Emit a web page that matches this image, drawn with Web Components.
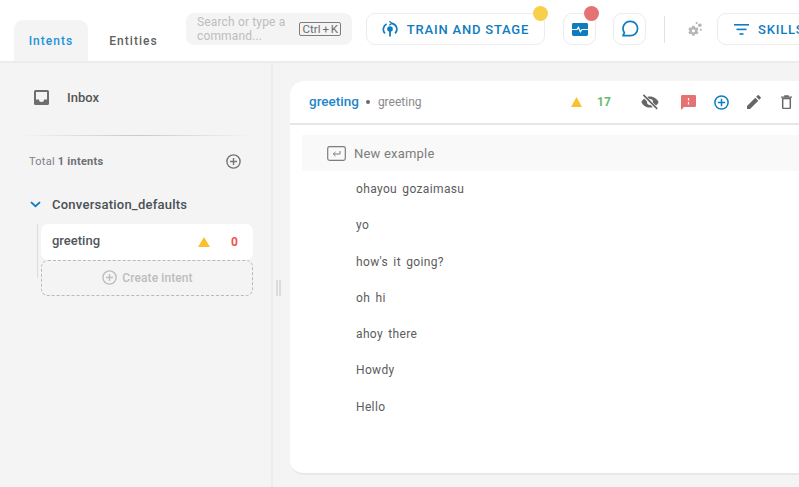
<!DOCTYPE html>
<html>
<head>
<meta charset="utf-8">
<style>
  html, body { margin: 0; height: 100%; overflow: hidden; background: #fff; font-family: Roboto, sans-serif; }
</style>
</head>
<body>
<app-shell>
  <top-bar slot="top"></top-bar>
  <side-panel slot="side"></side-panel>
  <intent-card slot="main">
    <example-row>ohayou gozaimasu</example-row>
    <example-row>yo</example-row>
    <example-row>how's it going?</example-row>
    <example-row>oh hi</example-row>
    <example-row>ahoy there</example-row>
    <example-row>Howdy</example-row>
    <example-row>Hello</example-row>
  </intent-card>
</app-shell>

<script>
class AppShell extends HTMLElement {
    connectedCallback() {
        let shadowRoot = this.attachShadow({ mode: 'open' });
        shadowRoot.innerHTML = `
            <style>
                :host { display: flex; flex-direction: column; width: 799px; height: 487px; overflow: hidden; }
                .body { display: flex; flex: 1; min-height: 0; background: #f4f4f4; }
                .main { flex: 1; min-width: 0; padding: 18px 0 12px 17px; display: flex; }
            </style>
            <slot name="top"></slot>
            <div class="body">
                <slot name="side"></slot>
                <div class="main"><slot name="main"></slot></div>
            </div>
        `;
    }
}
customElements.define('app-shell', AppShell);

class TopBar extends HTMLElement {
    connectedCallback() {
        let shadowRoot = this.attachShadow({ mode: 'open' });
        shadowRoot.innerHTML = `
            <style>
                :host { display: flex; align-items: flex-start; height: 61px; border-bottom: 2px solid #ececec; box-sizing: content-box; background: #fff; flex: none; overflow: hidden; }
                .tabs { display: flex; flex: none; margin: 20px 0 0 14px; height: 43px; font-size: 12px; font-weight: 500; letter-spacing: 1.05px; }
                .tab { width: 74px; display: flex; align-items: center; justify-content: center; border-radius: 9px 9px 0 0; color: #5f5f5f; box-sizing: border-box; padding-bottom: 1px; }
                .tab.on { background: #f4f4f4; color: #1f92d6; }
                .tab + .tab { width: 91px; }
                .search { flex: none; margin: 13px 0 0 7px; width: 166px; height: 32px; border-radius: 8px; background: #f4f4f4; display: flex; align-items: center; padding: 0 11px; box-sizing: border-box; justify-content: space-between; color: #bdbdbd; font-size: 12px; line-height: 14px; letter-spacing: .15px; white-space: nowrap; }
                .kbd { border: 1px solid #7d7d7d; border-radius: 2px; color: #6d6d6d; font-size: 11.500px; line-height: 12px; padding: 0 2px 0 3px; white-space: nowrap; letter-spacing: 0; word-spacing: -1px; }
                .btn { position: relative; flex: none; height: 32px; border: 1.500px solid #ececec; border-radius: 9px; box-sizing: border-box; margin-top: 13px; display: flex; align-items: center; justify-content: center; color: #0f7cc0; background: #fff; }
                .train { width: 179px; margin-left: 14px; font-size: 13px; font-weight: 500; letter-spacing: .8px; gap: 9px; }
                .square { width: 33px; }
                .skills { width: 110px; font-size: 13px; font-weight: 500; letter-spacing: .8px; gap: 9px; justify-content: flex-start; padding-left: 16px; }
                .dot { position: absolute; width: 15px; height: 15px; border-radius: 50%; top: -8px; right: -4px; }
                .rule { flex: none; width: 1px; height: 27px; background: #e2e2e2; margin: 16px 0 0 18px; }
                svg { flex: none; display: block; }
                .gear { flex: none; margin: 21px 14px 0 21px; }
            </style>
            <div class="tabs">
                <div class="tab on">Intents</div>
                <div class="tab">Entities</div>
            </div>
            <div class="search">
                <span>Search or type a<br>command...</span>
                <span class="kbd">Ctrl + K</span>
            </div>
            <div class="btn train">
                <svg width="16" height="16" viewBox="0 0 16 16" fill="none" stroke="#0f7cc0" stroke-width="1.700"><path d="M2.900 12.400A6 6 0 0 1 4.600 3M13.100 12.400A6 6 0 0 0 9.800 2.300"/><path d="M7.400 .3 L9.800 2.400 L7.300 4.300" stroke-width="1.300"/><circle cx="8" cy="8" r="2.800" fill="#0f7cc0" stroke="none"/><rect x="7.100" y="10" width="1.800" height="5.500" fill="#0f7cc0" stroke="none"/></svg>
                <span>TRAIN AND STAGE</span>
                <span class="dot" style="background:#f8cf4a"></span>
            </div>
            <div class="btn square" style="margin-left:18px">
                <svg width="16" height="13" viewBox="0 0 16 13"><rect width="16" height="13" rx="1.400" fill="#0f7cc0"/><path d="M0 6.500h5l1.400-2.200 2 4.400 1.600-2.200h6" fill="none" stroke="#fff" stroke-width="1.200"/></svg>
                <span class="dot" style="background:#e57373"></span>
            </div>
            <div class="btn square" style="margin-left:17px">
                <svg width="18" height="18" viewBox="0 0 18 18" fill="none" stroke="#0f7cc0" stroke-width="1.700"><path d="M9.400 1.300a7.200 7.200 0 0 1 0 14.400H2l1.400-3A7.200 7.200 0 0 1 9.400 1.300z" stroke-linejoin="round"/></svg>
            </div>
            <div class="rule"></div>
            <svg class="gear" width="17" height="18" viewBox="0 0 16 17" fill="#b5b5b5"><path d="M5.900 4.500h2.200l.3 1.400 1 .5 1.300-.5 1.100 1.900-1 .9v1.100l1 .9-1.100 1.900-1.300-.5-1 .5-.3 1.400H5.900l-.3-1.400-1-.5-1.300.5-1.100-1.900 1-.9V8.700l-1-.9 1.100-1.900 1.300.5 1-.5z"/><circle cx="7" cy="9.300" r="1.500" fill="#fff"/><circle cx="13" cy="4" r="1.700"/><circle cx="14" cy="8.300" r="1"/><circle cx="10" cy="2" r="1"/></svg>
            <div class="btn skills">
                <svg width="15" height="11" viewBox="0 0 15 11" fill="#0f7cc0"><rect width="15" height="1.600"/><rect x="2.500" y="4.600" width="10" height="1.600"/><rect x="5.500" y="9.200" width="4" height="1.600"/></svg>
                <span>SKILLS</span>
            </div>
        `;
    }
}
customElements.define('top-bar', TopBar);

class SidePanel extends HTMLElement {
    connectedCallback() {
        let shadowRoot = this.attachShadow({ mode: 'open' });
        shadowRoot.innerHTML = `
            <style>
                :host { display: block; position: relative; flex: none; width: 273px; box-sizing: border-box; border-right: 2px solid #ececec; padding: 0 18px 0 0; font-size: 13px; color: #4f4f4f; }
                .inbox { display: flex; align-items: center; height: 34px; margin-top: 17px; padding-left: 34px; font-weight: 500; color: #565656; }
                .inbox svg { margin-right: 18px; }
                .sep { height: 1px; margin: 21px 0 0 20px; background: linear-gradient(90deg, #f4f4f4, #c9c9c9 50%, #f4f4f4); }
                .total { display: flex; justify-content: space-between; align-items: center; height: 18px; margin-top: 16px; padding: 0 12px 0 29px; font-size: 11px; color: #7d8288; letter-spacing: .25px; }
                .total b { font-weight: 700; color: #6b7076; }
                .group { display: flex; align-items: center; margin: 25px 0 0 30px; height: 18px; font-weight: 500; gap: 11px; color: #4a4f55; letter-spacing: .24px; }
                .tree { position: relative; margin: 11px 0 0 41px; }
                .tree::before { content: ""; position: absolute; left: -4px; top: 0; bottom: 18px; width: 1px; background: #dcdcdc; }
                .item { height: 36px; background: #fff; border-radius: 7px; display: flex; align-items: center; padding: 0 15px 3px 11px; box-sizing: border-box; font-weight: 500; color: #52565b; }
                .item .name { flex: 1; }
                .item svg { margin: 3px 1px 0 0; }
                .item b { width: 19px; text-align: right; color: #ef5350; font-size: 12px; font-weight: 700; margin-left: 8px; padding-top: 3px; }
                .create { height: 36px; box-sizing: border-box; border: 1px dashed #b9b9b9; border-radius: 7px; display: flex; align-items: center; justify-content: center; gap: 5px; color: #bdbdbd; font-size: 12px; font-weight: 500; letter-spacing: .1px; padding: 0 0 1px 1px; }
                .handle { position: absolute; right: -10px; top: 217px; width: 5px; height: 16px; border: solid #dcdcdc; border-width: 0 2px; box-sizing: border-box; }
                svg { display: block; flex: none; }
            </style>
            <div class="inbox">
                <svg width="15" height="15" viewBox="0 0 15 15"><rect width="15" height="15" rx="1.600" fill="#6e6e6e"/><path d="M2 2h11v7.400H10a2.500 2.500 0 0 1-5 0H2z" fill="#f4f4f4"/></svg>
                <span>Inbox</span>
            </div>
            <div class="sep"></div>
            <div class="total">
                <span>Total <b>1 intents</b></span>
                <svg width="15" height="15" viewBox="0 0 15 15" fill="none" stroke="#757575" stroke-width="1.400"><circle cx="7.500" cy="7.500" r="6.600"/><path d="M7.500 4v7M4 7.500h7"/></svg>
            </div>
            <div class="group">
                <svg width="11" height="7" viewBox="0 0 11 7" fill="none" stroke="#0f7cc0" stroke-width="1.800"><path d="M1 1.200l4.500 4 4.500-4"/></svg>
                <span>Conversation_defaults</span>
            </div>
            <div class="tree">
                <div class="item">
                    <span class="name">greeting</span>
                    <svg width="12" height="10" viewBox="0 0 12 10"><path d="M6 0l6 10H0z" fill="#fbc02d"/></svg>
                    <b>0</b>
                </div>
                <div class="create">
                    <svg width="15" height="15" viewBox="0 0 15 15" fill="none" stroke="#bdbdbd" stroke-width="1.400"><circle cx="7.500" cy="7.500" r="6.600"/><path d="M7.500 4v7M4 7.500h7"/></svg>
                    <span>Create intent</span>
                </div>
            </div>
            <div class="handle"></div>
        `;
    }
}
customElements.define('side-panel', SidePanel);

class IntentCard extends HTMLElement {
    connectedCallback() {
        let shadowRoot = this.attachShadow({ mode: 'open' });
        shadowRoot.innerHTML = `
            <style>
                :host { display: flex; flex-direction: column; flex: 1; min-width: 0; background: #fff; border-radius: 14px 0 0 14px; border-bottom: 2px solid #e8e8e8; box-sizing: border-box; }
                header { display: flex; align-items: center; height: 42px; border-bottom: 2px solid #e6e6e6; padding-left: 19px; flex: none; }
                .title { color: #1f86c9; font-size: 13.500px; font-weight: 500; padding-bottom: 2px; }
                .bullet { width: 4px; height: 4px; border-radius: 50%; background: #6a6a6a; margin: 0 8px 0 7px; }
                .sub { color: #8a8a8a; font-size: 12px; flex: 1; padding-bottom: 1px; }
                .count { color: #66bb6a; font-size: 12px; font-weight: 700; margin: 0 29px 0 17px; width: 15px; padding-bottom: 1px; }
                .icons { display: flex; align-items: center; margin-right: 2px; }
                svg { display: block; flex: none; }
                .new { display: flex; align-items: center; height: 36px; margin: 10px 0 0 12px; background: #f9f9f9; padding-left: 25px; gap: 8px; color: #7d7d7d; font-size: 13px; letter-spacing: .2px; flex: none; }
            </style>
            <header>
                <span class="title">greeting</span>
                <span class="bullet"></span>
                <span class="sub">greeting</span>
                <svg style="margin-right:-2px" width="11" height="10" viewBox="0 0 11 10"><path d="M5.500 0l5.500 10H0z" fill="#fbc02d"/></svg>
                <span class="count">17</span>
                <div class="icons">
                    <svg width="18" height="16" viewBox="0 0 18 16" fill="#666"><path d="M9 2.400C5 2.400 1.800 4.900.4 8c1.400 3.100 4.600 5.600 8.600 5.600S16.200 11.100 17.600 8C16.200 4.900 13 2.400 9 2.400z"/><circle cx="9" cy="8" r="3" fill="#fff"/><path d="M2 1l14 14" stroke="#fff" stroke-width="3.400"/><path d="M2.400.9l13.800 14" stroke="#666" stroke-width="1.700"/></svg>
                    <svg style="margin-left:22px" width="15" height="15" viewBox="0 0 15 15"><path d="M1.200 0h12.600A1.200 1.200 0 0 1 15 1.200v9.600a1.200 1.200 0 0 1-1.200 1.200H3l-3 3V1.200A1.200 1.200 0 0 1 1.200 0z" fill="#e57373"/><path d="M7.500 3v2.500M7.500 7v2.500" stroke="#fff" stroke-width="1.200"/></svg>
                    <svg style="margin-left:18px" width="15" height="15" viewBox="0 0 15 15" fill="none" stroke="#0f7cc0" stroke-width="1.500"><circle cx="7.500" cy="7.500" r="6.600"/><path d="M7.500 3.800v7.400M3.800 7.500h7.400"/></svg>
                    <svg style="margin-left:18px" width="14" height="14" viewBox="0 0 14 14" fill="#666"><path d="M0 11v3h3l8.300-8.300-3-3zM13.700 3.300a.8.800 0 0 0 0-1.100L11.800.3a.8.800 0 0 0-1.100 0L9.200 1.800l3 3z"/></svg>
                    <svg style="margin-left:20px;margin-right:5px" width="11" height="14" viewBox="0 0 11 14"><path d="M0 1.400h11v1.400H0zM3.200.2h4.600v1.400H3.200z" fill="#6a6a6a"/><path d="M1.700 3.400h7.600v9a1 1 0 0 1-1 1H2.700a1 1 0 0 1-1-1z" fill="none" stroke="#6a6a6a" stroke-width="1.500"/></svg>
                </div>
            </header>
            <div class="new">
                <svg width="19" height="15" viewBox="0 0 19 15" fill="none" stroke="#7d7d7d"><rect x=".7" y=".7" width="17.600" height="13.600" rx="1.800" stroke-width="1.200"/><path d="M13 5v3H6.500M8.500 6L6.300 8l2.200 2" stroke-width="1"/></svg>
                <span>New example</span>
            </div>
            <div><slot></slot></div>
        `;
    }
}
customElements.define('intent-card', IntentCard);

class ExampleRow extends HTMLElement {
    connectedCallback() {
        let shadowRoot = this.attachShadow({ mode: 'open' });
        shadowRoot.innerHTML = `
            <style>
                :host { display: block; height: 36.300px; line-height: 36px; padding-left: 66px; font-size: 12px; color: #5c5c5c; letter-spacing: .35px; word-spacing: 2px; }
            </style>
            <slot></slot>
        `;
    }
}
customElements.define('example-row', ExampleRow);
</script>
</body>
</html>
